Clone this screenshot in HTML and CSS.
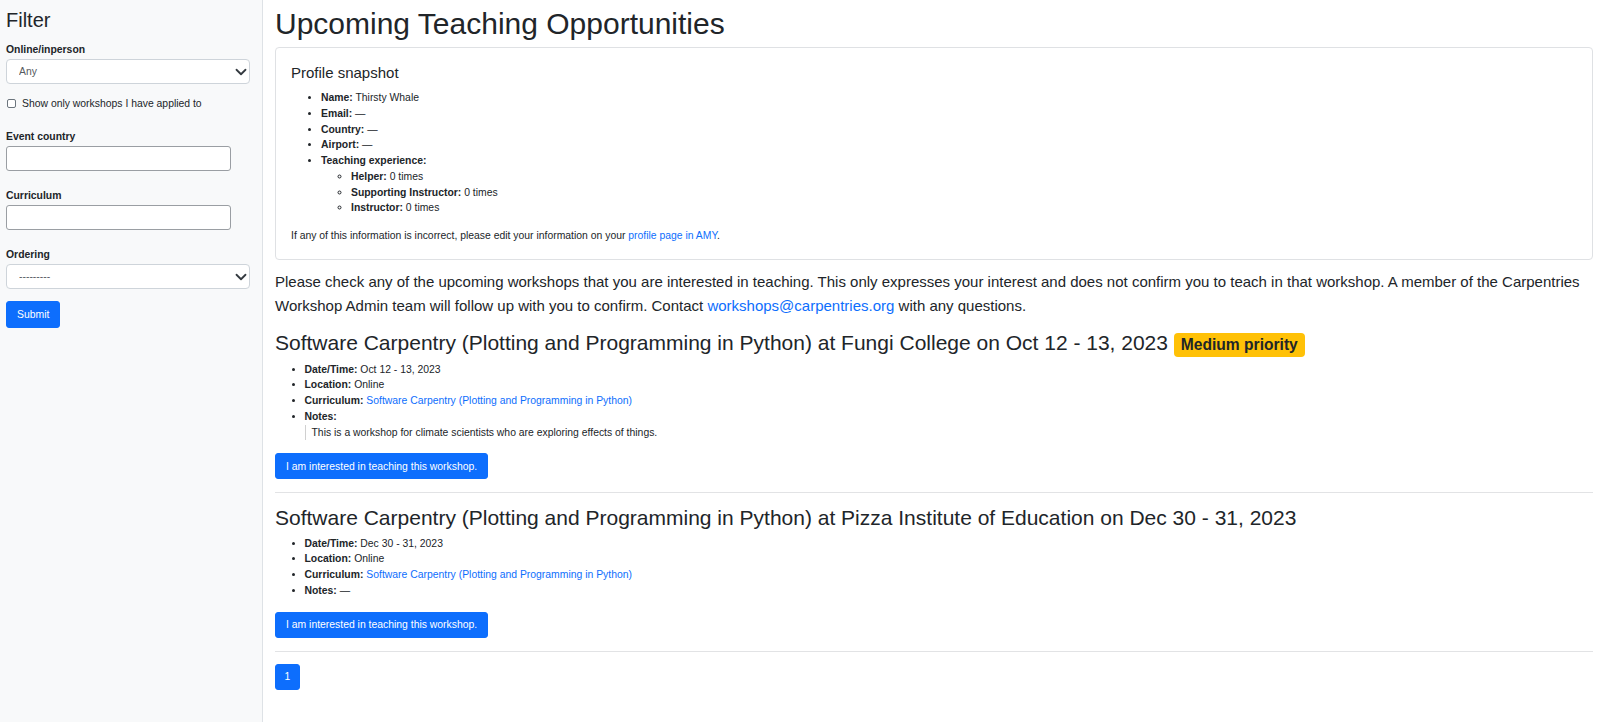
FILE: index.html
```html
<!DOCTYPE html>
<html lang="en">
<head>
<meta charset="utf-8">
<title>Upcoming Teaching Opportunities</title>
<link rel="stylesheet" href="styles.css">
</head>
<body>
<div class="layout">
  <aside class="sidebar">
    <h5 class="filter-title">Filter</h5>
    <form class="filter-form">
      <div class="field field-first">
        <label class="field-label" for="online">Online/inperson</label>
        <div class="select-wrap">
          <select id="online" class="form-select"><option>Any</option></select>
          <svg class="chevron" viewBox="0 0 16 16" width="12" height="12"><path d="M2 5l6 6 6-6" fill="none" stroke="#343a40" stroke-width="2.4" stroke-linecap="round" stroke-linejoin="round"/></svg>
        </div>
      </div>
      <div class="check-row">
        <input type="checkbox" id="applied" class="check">
        <label for="applied" class="check-label">Show only workshops I have applied to</label>
      </div>
      <div class="field">
        <label class="field-label" for="country">Event country</label>
        <input type="text" id="country" class="text-input">
      </div>
      <div class="field">
        <label class="field-label" for="curriculum">Curriculum</label>
        <input type="text" id="curriculum" class="text-input">
      </div>
      <div class="field field-last">
        <label class="field-label" for="ordering">Ordering</label>
        <div class="select-wrap">
          <select id="ordering" class="form-select"><option>---------</option></select>
          <svg class="chevron" viewBox="0 0 16 16" width="12" height="12"><path d="M2 5l6 6 6-6" fill="none" stroke="#343a40" stroke-width="2.4" stroke-linecap="round" stroke-linejoin="round"/></svg>
        </div>
      </div>
      <button type="button" class="btn btn-submit">Submit</button>
    </form>
  </aside>
  <main class="main">
    <h1 class="page-title">Upcoming Teaching Opportunities</h1>
    <section class="card">
      <h5 class="card-title">Profile snapshot</h5>
      <ul class="info-list">
        <li><strong>Name:</strong> Thirsty Whale</li>
        <li><strong>Email:</strong> —</li>
        <li><strong>Country:</strong> —</li>
        <li><strong>Airport:</strong> —</li>
        <li><strong>Teaching experience:</strong>
          <ul class="sub-list">
            <li><strong>Helper:</strong> 0 times</li>
            <li><strong>Supporting Instructor:</strong> 0 times</li>
            <li><strong>Instructor:</strong> 0 times</li>
          </ul>
        </li>
      </ul>
      <p class="small-note">If any of this information is incorrect, please edit your information on your <a href="#">profile page in AMY</a>.</p>
    </section>
    <p class="intro">Please check any of the upcoming workshops that you are interested in teaching. This only expresses your interest and does not confirm you to teach in that workshop. A member of the Carpentries Workshop Admin team will follow up with you to confirm. Contact <a href="#">workshops@carpentries.org</a> with any questions.</p>

    <article class="workshop">
      <h3 class="workshop-title">Software Carpentry (Plotting and Programming in Python) at Fungi College on Oct 12 - 13, 2023 <span class="badge">Medium priority</span></h3>
      <ul class="ws-list">
        <li><strong>Date/Time:</strong> Oct 12 - 13, 2023</li>
        <li><strong>Location:</strong> Online</li>
        <li><strong>Curriculum:</strong> <a href="#">Software Carpentry (Plotting and Programming in Python)</a></li>
        <li><strong>Notes:</strong>
          <blockquote class="notes">This is a workshop for climate scientists who are exploring effects of things.</blockquote>
        </li>
      </ul>
      <button type="button" class="btn">I am interested in teaching this workshop.</button>
    </article>
    <hr class="divider">
    <article class="workshop">
      <h3 class="workshop-title">Software Carpentry (Plotting and Programming in Python) at Pizza Institute of Education on Dec 30 - 31, 2023</h3>
      <ul class="ws-list">
        <li><strong>Date/Time:</strong> Dec 30 - 31, 2023</li>
        <li><strong>Location:</strong> Online</li>
        <li><strong>Curriculum:</strong> <a href="#">Software Carpentry (Plotting and Programming in Python)</a></li>
        <li><strong>Notes:</strong> —</li>
      </ul>
      <button type="button" class="btn">I am interested in teaching this workshop.</button>
    </article>
    <hr class="divider">
    <nav class="pagination">
      <span class="page-btn">1</span>
    </nav>
  </main>
</div>
</body>
</html>
```

FILE: styles.css
```css
* { box-sizing: border-box; }

html, body {
  margin: 0;
  padding: 0;
}

body {
  font-family: "Liberation Sans", Arial, Helvetica, sans-serif;
  color: #212529;
  background: #ffffff;
  font-size: 15px;
  line-height: 1.5;
}

a {
  color: #0d6efd;
  text-decoration: none;
}

.layout {
  display: flex;
  min-height: 100vh;
}

/* Sidebar */
.sidebar {
  flex: 0 0 263px;
  width: 263px;
  background: #f8f9fa;
  border-right: 1px solid #dee2e6;
  padding: 8px 12px 0 6px;
}

.filter-title {
  font-size: 20px;
  font-weight: 400;
  line-height: 1.2;
  margin: 0 0 10px;
}

.filter-form {
  display: flex;
  flex-direction: column;
  align-items: flex-start;
}

.field {
  display: flex;
  flex-direction: column;
  align-items: flex-start;
  width: 100%;
  margin-bottom: 16.5px;
}

.field-first { margin-bottom: 12px; }
.field-last { margin-bottom: 12.5px; }

.field-label {
  font-size: 10.4px;
  line-height: 15.6px;
  font-weight: 700;
  margin-bottom: 1.5px;
}

.select-wrap {
  position: relative;
  width: 100%;
}

.form-select {
  appearance: none;
  -webkit-appearance: none;
  display: block;
  width: 100%;
  height: 25px;
  padding: 0 36px 0 12px;
  font-family: inherit;
  font-size: 10.4px;
  color: #555a60;
  background: #ffffff;
  border: 1px solid #ced4da;
  border-radius: 4px;
}

.chevron {
  position: absolute;
  right: 3px;
  top: 7px;
  pointer-events: none;
}

.check-row {
  display: flex;
  align-items: center;
  gap: 6px;
  margin-bottom: 17px;
  font-size: 10.4px;
  line-height: 15.6px;
  padding-left: 1px;
}

.check {
  appearance: none;
  -webkit-appearance: none;
  width: 9px;
  height: 9px;
  margin: 0;
  border: 1px solid #6c757d;
  border-radius: 2px;
  background: #ffffff;
}

.check-label {
  color: #212529;
}

.text-input {
  width: 225px;
  height: 25.5px;
  padding: 2px 6px;
  font-family: inherit;
  font-size: 10.4px;
  border: 1px solid #9a9ea3;
  border-radius: 3px;
  background: #ffffff;
}

.btn {
  display: inline-block;
  font-family: inherit;
  font-size: 10.4px;
  line-height: 15.6px;
  color: #ffffff;
  background: #0d6efd;
  border: 1px solid #0d6efd;
  border-radius: 3px;
  padding: 4.2px 10px;
  cursor: pointer;
}

.btn-submit {
  padding-top: 4.7px;
  padding-bottom: 4.7px;
}

/* Main */
.main {
  flex: 1;
  min-width: 0;
  padding: 6px 4px 0 12px;
}

.page-title {
  font-size: 30px;
  font-weight: 400;
  line-height: 1.2;
  margin: 0 0 5px;
}

.card {
  border: 1px solid #dfe1e4;
  border-radius: 4px;
  padding: 16px 15px;
  margin-bottom: 10px;
}

.card-title {
  font-size: 15px;
  font-weight: 400;
  line-height: 1.2;
  margin: 0 0 8px;
}

.info-list {
  font-size: 10.4px;
  line-height: 15.75px;
  margin: 0 0 11.5px;
  padding-left: 30px;
}

.sub-list {
  list-style: circle;
  margin: 0;
  padding-left: 30px;
}

.small-note {
  font-size: 10.4px;
  line-height: 15.75px;
  margin: 0;
}

.intro {
  font-size: 15px;
  line-height: 23.4px;
  margin: 0 0 13px;
}

.workshop-title {
  font-size: 21px;
  font-weight: 400;
  line-height: 1.2;
  margin: 0 0 5px;
}

.badge {
  display: inline-block;
  font-size: 15.6px;
  font-weight: 700;
  line-height: 1;
  padding: 4px 7px;
  background: #ffc107;
  color: #212529;
  border-radius: 4px;
  vertical-align: baseline;
}

.ws-list {
  font-size: 10.4px;
  line-height: 15.75px;
  margin: 0 0 13px;
  padding-left: 29.5px;
}

.notes {
  margin: 0;
  padding-left: 6px;
  border-left: 1px solid #d0d0d0;
}

.divider {
  border: 0;
  border-top: 1px solid #e2e3e5;
  margin: 13px 0 12px;
}

.pagination {
  display: flex;
}

.page-btn {
  display: inline-block;
  font-size: 10.4px;
  line-height: 15.6px;
  color: #ffffff;
  background: #0d6efd;
  border: 1px solid #0d6efd;
  border-radius: 3px;
  padding: 4.5px 8.5px;
}
```
